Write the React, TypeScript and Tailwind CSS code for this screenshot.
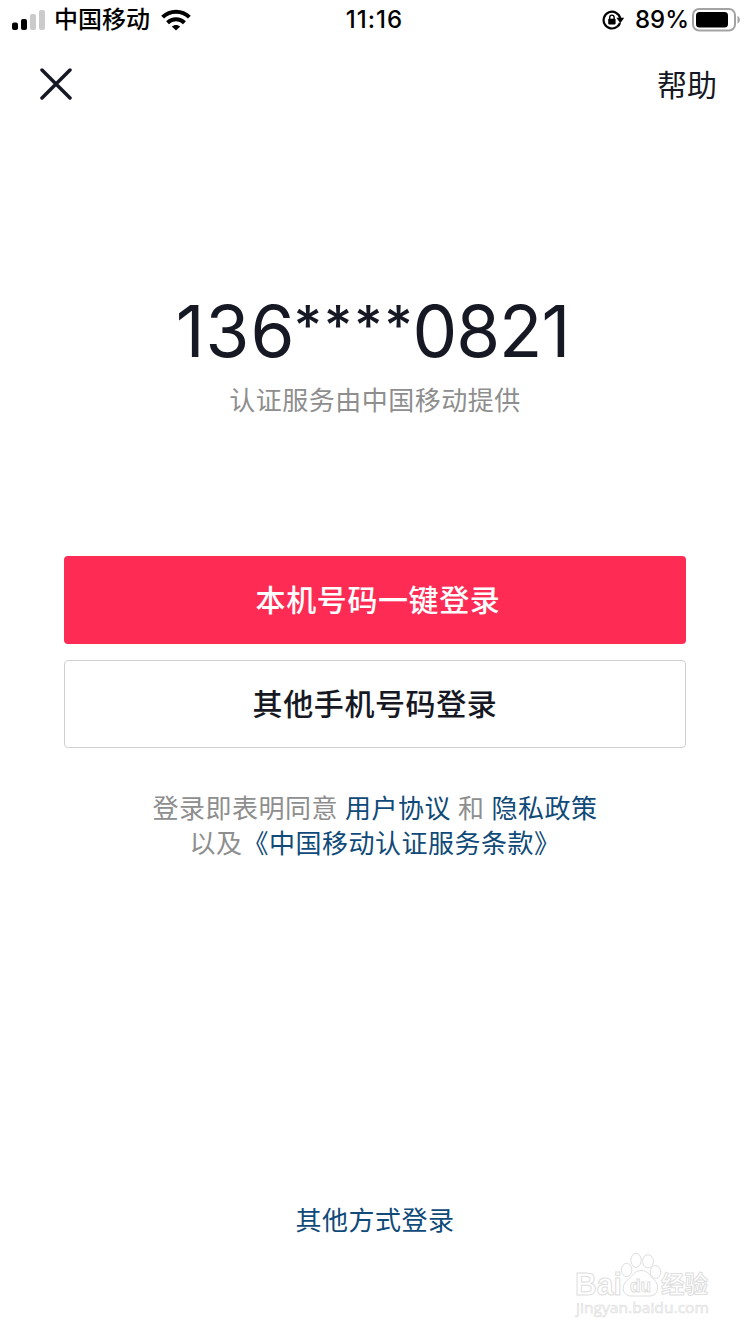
import type { ReactNode } from "react";

interface LinkProps {
   children: ReactNode;
}

const SignalIcon = () => {
   return (
      <svg width="34" height="22" viewBox="0 0 34 22">
         <rect x="0" y="13.5" width="6" height="7.5" rx="2" fill="#000" />
         <rect x="9" y="10" width="6" height="11" rx="2" fill="#000" />
         <rect x="18" y="5" width="6" height="16" rx="2" fill="#cbcbcb" />
         <rect x="27" y="1" width="6" height="20" rx="2" fill="#cbcbcb" />
      </svg>
   );
};

const WifiIcon = () => {
   return (
      <svg width="30" height="22" viewBox="0 0 30 22" fill="none" stroke="#000" strokeWidth="4">
         <path d="M1.6 8.2 C9 0.9 21 0.9 28.4 8.2" />
         <path d="M6.5 13.8 C11.3 9.2 18.7 9.2 23.5 13.8" />
         <path d="M15 21.6 L10.8 17.6 C13 15.3 17 15.3 19.2 17.6 Z" fill="#000" stroke="none" />
      </svg>
   );
};

const RotationLockIcon = () => {
   return (
      <svg width="23" height="20" viewBox="0 0 23 20" fill="none">
         <path d="M15.2 16.7 A8.4 8.4 0 1 1 18.2 8.2" stroke="#000" strokeWidth="2.2" />
         <path d="M18 13 A8.4 8.4 0 0 1 15.2 16.7" stroke="#000" strokeWidth="2.2" />
         <path d="M14.4 7.8 H22.2 L18.3 13.2 Z" fill="#000" />
         <rect x="6.2" y="8.8" width="7.4" height="5.6" rx="0.8" fill="#000" />
         <path d="M7.7 9.2 V7.3 A2.2 2.2 0 0 1 12.1 7.3 V9.2" stroke="#000" strokeWidth="1.4" />
      </svg>
   );
};

const BatteryIcon = () => {
   return (
      <svg width="49" height="24" viewBox="0 0 49 24" fill="none">
         <rect x="1" y="1" width="42" height="21.5" rx="6" stroke="#a3a3a3" strokeWidth="2" />
         <rect x="4" y="4" width="32" height="15.5" rx="3.5" fill="#000" />
         <path d="M45.5 8 C48.6 9.2 48.6 14.3 45.5 15.5 Z" fill="#a3a3a3" />
      </svg>
   );
};

const StatusBar = () => {
   return (
      <div className="grid h-10 grid-cols-3 items-center pr-[9px] pl-3 text-black">
         <div className="flex items-center">
            <SignalIcon />
            <span className="ml-2 text-2xl font-medium whitespace-nowrap">中国移动</span>
            <span className="ml-[11px]">
               <WifiIcon />
            </span>
         </div>
         <span className="pr-1 text-center text-2xl font-medium tracking-[1px]">11:16</span>
         <div className="flex items-center justify-end">
            <RotationLockIcon />
            <span className="ml-2.5 text-2xl font-medium">89%</span>
            <span className="ml-[3px]">
               <BatteryIcon />
            </span>
         </div>
      </div>
   );
};

const Link = ({ children }: LinkProps) => {
   return <a className="text-[#0f4a78]">{children}</a>;
};

const Watermark = () => {
   return (
      <svg
         className="absolute top-[1250px] left-[570px]"
         width="150"
         height="70"
         viewBox="0 0 150 70"
         fill="#fff"
         stroke="#dedede"
         strokeWidth="1"
         fontFamily='"Liberation Sans", "Noto Sans CJK SC", sans-serif'
         fontWeight="bold"
      >
         <text x="5" y="44.5" fontSize="31" textLength="47" lengthAdjust="spacingAndGlyphs">Bai</text>
         <ellipse cx="56.6" cy="20" rx="5.3" ry="6.6" />
         <ellipse cx="66" cy="10.3" rx="5.2" ry="7" />
         <ellipse cx="78" cy="11.3" rx="5.4" ry="6.6" />
         <ellipse cx="85.5" cy="22" rx="5.3" ry="6.4" />
         <path d="M71 20.5 C64 20.5 62.5 26.5 58 29.5 C50.5 35 52 46 61 46 C66 46 76 46 80 46 C88.5 46 90 35 84 29.5 C80 26 78.5 20.5 71 20.5 Z" />
         <text x="60" y="42" fontSize="18" textLength="21" lengthAdjust="spacingAndGlyphs">du</text>
         <text x="91" y="43" fontSize="24" textLength="47" lengthAdjust="spacingAndGlyphs">经验</text>
         <text
            x="6"
            y="62.5"
            fontSize="15"
            fontFamily='"Open Sans", sans-serif'
            fontWeight="normal"
            fill="#f4f4f4"
            strokeWidth="0.5"
            textLength="133"
            lengthAdjust="spacingAndGlyphs"
         >
            jingyan.baidu.com
         </text>
      </svg>
   );
};

const App = () => {
   return (
      <div className='relative flex h-[1334px] w-[750px] flex-col overflow-hidden bg-white font-[Inter,"Noto_Sans_CJK_SC",sans-serif] text-[#161823]'>
         <StatusBar />

         <header className="flex h-[88px] items-center justify-between pr-[33px] pl-10">
            <button aria-label="关闭">
               <svg width="32" height="32" viewBox="0 0 32 32" stroke="#161823" strokeWidth="3.5" strokeLinecap="round">
                  <path d="M2 2 L30 30 M30 2 L2 30" />
               </svg>
            </button>
            <button className="pt-0.5 text-[30px]">帮助</button>
         </header>

         <main className="flex flex-col items-center px-16 pt-[163px]">
            <h1 className="flex h-20 items-start pr-[5px] text-[71px] leading-20">
               <span className="tracking-[1px]">136</span>
               <span className="-mr-0.5 -ml-0.5 text-[55px] leading-[69px] font-medium tracking-[1.6px]">****</span>
               <span className="tracking-[-1px]">0821</span>
            </h1>
            <p className="mt-3 text-[26px] leading-9 tracking-[0.5px] text-[#8e8e8e]">认证服务由中国移动提供</p>

            <div className="mt-[137px] flex w-full flex-col gap-4">
               <button className="h-22 rounded bg-[#fe2c55] pl-1.5 text-[30px] font-medium tracking-[0.6px] text-white">
                  本机号码一键登录
               </button>
               <button className="h-22 rounded border border-[#d0d1d3] text-[30px] font-medium tracking-[0.6px]">
                  其他手机号码登录
               </button>
            </div>

            <div className="mt-[43px] text-center text-[26px] leading-[35px] tracking-[0.5px] text-[#8e8e8e]">
               <p className="[word-spacing:-0.8px]">
                  登录即表明同意 <Link>用户协议</Link> 和 <Link>隐私政策</Link>
               </p>
               <p>
                  以及<Link>《中国移动认证服务条款》</Link>
               </p>
            </div>
         </main>

         <footer className="mt-auto pb-[95px] text-center text-[26px] leading-9 tracking-[0.5px]">
            <Link>其他方式登录</Link>
         </footer>

         <Watermark />
      </div>
   );
};

export default App;
